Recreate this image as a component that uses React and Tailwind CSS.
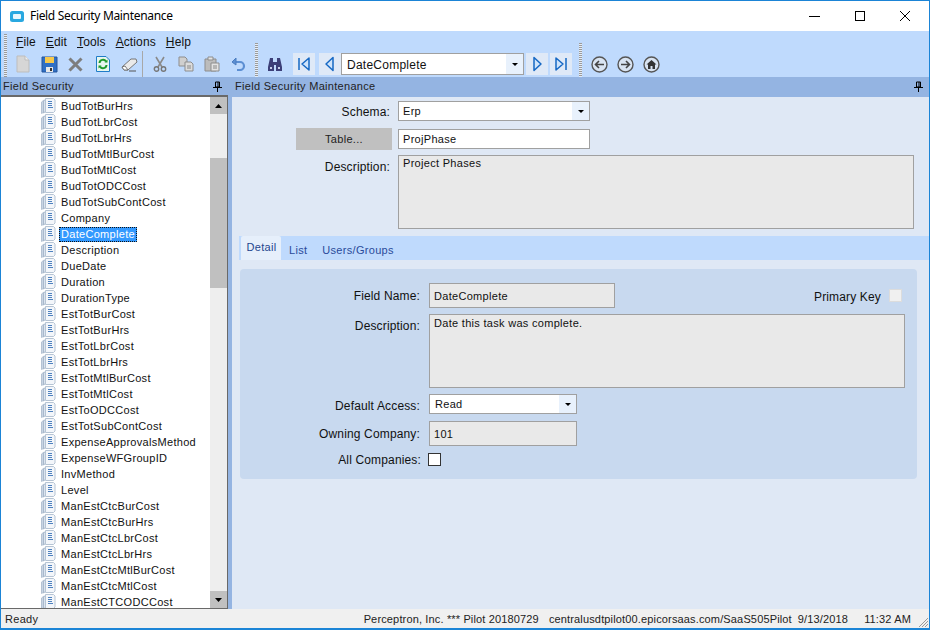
const fields = ["BudTotBurHrs","BudTotLbrCost","BudTotLbrHrs","BudTotMtlBurCost","BudTotMtlCost","BudTotODCCost","BudTotSubContCost","Company","DateComplete","Description","DueDate","Duration","DurationType","EstTotBurCost","EstTotBurHrs","EstTotLbrCost","EstTotLbrHrs","EstTotMtlBurCost","EstTotMtlCost","EstToODCCost","EstTotSubContCost","ExpenseApprovalsMethod","ExpenseWFGroupID","InvMethod","Level","ManEstCtcBurCost","ManEstCtcBurHrs","ManEstCtcLbrCost","ManEstCtcLbrHrs","ManEstCtcMtlBurCost","ManEstCtcMtlCost","ManEstCTCODCCost"];

function Grip({ className = "" }) {
  return <div className={"w-[3px] h-[43px] shrink-0 bg-[repeating-linear-gradient(to_bottom,#9a9a9a_0,#9a9a9a_1px,#e4edf8_1px,#e4edf8_2px)] " + className} />;
}
function TreeIcon() {
  return (
    <svg width="15" height="16" viewBox="0 0 15 16" className="shrink-0">
      <path d="M.5 4 L3 2 V14 L.5 15.5 Z" fill="#c9d5e4" stroke="#b4c2d3" />
      <path d="M2.5 3 L5 1 V13 L2.5 15 Z" fill="#dbe4ef" stroke="#a9b9cc" />
      <path d="M4.5 .5 H12.5 L14 2 V13 L12.5 14.5 H4.5 Z" fill="#f3f6fa" stroke="#b6c4d4" />
      <path d="M7 3.5H11M7 5.5H11M7 7.5H11M7 9.5H12" stroke="#4f82c0" strokeWidth="1" />
    </svg>
  );
}
function Caret() {
  return <svg width="6" height="3" viewBox="0 0 6 3"><path d="M0 0H6L3 3Z" fill="#000" /></svg>;
}
function Pin() {
  return (
    <svg width="9" height="11" viewBox="0 0 9 11" fill="none">
      <path d="M2.5 1H6.5V6H2.5Z M5 1V6" stroke="#000" />
      <path d="M0 6.5H9M4.5 7V11" stroke="#000" />
    </svg>
  );
}
function Combo({ value, className = "", pad = "pl-1" }) {
  return (
    <div className={"flex items-stretch bg-white border border-[#a0a0a0] shrink-0 " + className}>
      <div className={"flex-1 flex items-center min-w-0 " + pad}>{value}</div>
      <div className="w-[17px] bg-[#e8f1fc] flex items-center justify-center"><Caret /></div>
    </div>
  );
}
function NavBtn({ children, className = "" }) {
  return <div className={"h-[22px] w-[22px] bg-[#dfe9f7] flex items-center justify-center shrink-0 " + className}>{children}</div>;
}
function Nav({ d }) {
  return <svg width="16" height="16" viewBox="0 0 16 16"><path d={d} fill="#cfe4fb" stroke="#1668c4" strokeWidth="1.5" strokeLinejoin="round" /></svg>;
}
function Circle({ children }) {
  return (
    <svg width="17" height="17" viewBox="0 0 17 17" fill="none" className="shrink-0">
      <circle cx="8.5" cy="8.5" r="7.5" fill="#d9e4f2" stroke="#555" strokeWidth="1.4" />
      {children}
    </svg>
  );
}
function Toolbar() {
  return (
    <div className="h-[22px] flex items-center">
      <svg width="14" height="18" viewBox="0 0 14 18" className="ml-[3px] shrink-0"><path d="M1 1H9L13 5V17H1Z" fill="#d6d6d6" stroke="#bdbdbd" /><path d="M9 1V5H13" fill="#eee" stroke="#bdbdbd" /></svg>
      <svg width="17" height="17" viewBox="0 0 17 17" className="ml-[11px] shrink-0"><path d="M1 1H16V16H1Z" fill="#2f6fc4" stroke="#24549a" /><path d="M4 1H13V7H4Z" fill="#f5c84c" /><path d="M5 11H12V16H5Z" fill="#e8e8e8" /><path d="M9 12H11V15H9Z" fill="#333" /></svg>
      <svg width="15" height="15" viewBox="0 0 15 15" className="ml-[10px] shrink-0"><path d="M1.5 1.5L13.5 13.5M13.5 1.5L1.5 13.5" stroke="#7d7d7d" strokeWidth="3" /></svg>
      <svg width="14" height="16" viewBox="0 0 14 16" className="ml-[13px] shrink-0"><path d="M.5.5H10L13.5 4V15.5H.5Z" fill="#e7f6ee" stroke="#1f7cc8" /><path d="M3.5 7A3.5 3.5 0 0 1 10 5.5M10.5 9A3.5 3.5 0 0 1 4 10.5" stroke="#1f9a2c" strokeWidth="2" fill="none" /><path d="M8.5 6.5H11.5V3.5ZM5.5 9.5H2.5V12.5Z" fill="#1f9a2c" /></svg>
      <svg width="17" height="15" viewBox="0 0 17 15" className="ml-[11px] shrink-0"><path d="M1 10L10 2L15 2L16 5L7 13H3Z" fill="#eaeaea" stroke="#777" /><path d="M1 10L4 9L7 13H3Z" fill="#fff" stroke="#777" /><path d="M8 14H15" stroke="#555" /></svg>
      <div className="w-px h-[26px] bg-[#a8a8a8] ml-[4px] shrink-0" />
      <svg width="14" height="16" viewBox="0 0 14 16" fill="none" className="ml-[10px] shrink-0"><path d="M3 1L9 11M11 1L5 11" stroke="#8a8a8a" strokeWidth="1.6" /><circle cx="3.5" cy="13" r="2.2" stroke="#777" strokeWidth="1.4" /><circle cx="10.5" cy="13" r="2.2" stroke="#777" strokeWidth="1.4" /></svg>
      <svg width="16" height="16" viewBox="0 0 16 16" className="ml-[11px] shrink-0"><path d="M1 1H7L9 3V10H1Z" fill="#cfcfcf" stroke="#8d8d8d" /><path d="M7 6H13L15 8V15H7Z" fill="#dcdcdc" stroke="#8d8d8d" /><path d="M9 10H13M9 12H13" stroke="#888" /></svg>
      <svg width="16" height="16" viewBox="0 0 16 16" className="ml-[10px] shrink-0"><path d="M1 3H12V15H1Z" fill="#bcbcbc" stroke="#8d8d8d" /><path d="M4 1H9V4H4Z" fill="#e4e4e4" stroke="#8d8d8d" /><path d="M7 7H15V15H7Z" fill="#e2e2e2" stroke="#8d8d8d" /><path d="M9 10H13M9 12H13" stroke="#888" /></svg>
      <svg width="15" height="14" viewBox="0 0 15 14" fill="none" className="ml-[11px] shrink-0"><path d="M3 5H9A4 4 0 0 1 9 13H6" stroke="#5c8fd3" strokeWidth="2.2" /><path d="M5 1V8L1 5Z" fill="#5c8fd3" stroke="#4a7cc0" /></svg>
      <Grip className="ml-[9px] -my-[10px]" />
      <svg width="16" height="15" viewBox="0 0 16 15" className="ml-[9px] shrink-0"><path d="M3 1H6V5H10V1H13L15 10V14H9V8H7V14H1V10Z" fill="#3c3f78" /><path d="M3 11H5M11 11H13" stroke="#c8d0e8" strokeWidth="2" /></svg>
      <NavBtn className="ml-[10px]"><Nav d="M3 2V14 M13 2V14L6 8Z" /></NavBtn>
      <NavBtn className="ml-[4px]"><Nav d="M11 1.5V14.5L4 8Z" /></NavBtn>
      <Combo value={<span className="pt-px">DateComplete</span>} className="w-[183px] h-[22px] text-[12px] tracking-[0.25px]" pad="pl-[5px]" />
      <NavBtn className="ml-[2px]"><Nav d="M5 1.5V14.5L12 8Z" /></NavBtn>
      <NavBtn className="ml-[2px]"><Nav d="M13 2V14 M3 2V14L10 8Z" /></NavBtn>
      <Grip className="ml-[7px] -my-[10px]" />
      <div className="ml-[9px]"><Circle><path d="M13 8.5H5M8 5L4.5 8.5L8 12" stroke="#444" strokeWidth="1.6" /></Circle></div>
      <div className="ml-[9px]"><Circle><path d="M4 8.5H12M9 5L12.5 8.5L9 12" stroke="#444" strokeWidth="1.6" /></Circle></div>
      <div className="ml-[9px]"><Circle><path d="M3.5 8.5L8.5 4L13.5 8.5H12V13H9.5V10H7.5V13H5V8.5Z" fill="#333" /></Circle></div>
    </div>
  );
}
const input = "border border-[#a0a0a0] shrink-0";
const ro = "bg-[#e9e9e9] " + input;
const label = "text-right text-[12px] tracking-[0.15px]";

export default function App() {
  return (
    <div className="w-[930px] h-[630px] flex flex-col overflow-hidden bg-white border-x border-t border-[#1b84d6] border-b-2 text-[11px] text-[#111] leading-none tracking-[0.3px] font-['Liberation_Sans',Arial,sans-serif] select-none">
      {/* title bar */}
      <div className="h-[30px] flex items-center shrink-0 bg-white">
        <svg width="14" height="11" viewBox="0 0 14 11" className="ml-[9px]"><rect width="14" height="11" rx="2.5" fill="#29a8e0" /><rect x="3" y="3" width="8" height="5" rx="1" fill="#e8f7fd" /></svg>
        <span className="ml-[6px] text-[12px] tracking-[-0.33px] text-black font-['Noto_Sans',sans-serif]">Field Security Maintenance</span>
        <div className="ml-auto flex items-center">
          <svg width="11" height="1" className="mr-[35px]"><rect width="11" height="1" fill="#000" /></svg>
          <svg width="10" height="10" className="mr-[35px]"><rect x=".5" y=".5" width="9" height="9" fill="none" stroke="#000" /></svg>
          <svg width="10" height="10" className="mr-[19px]"><path d="M0 0L10 10M10 0L0 10" stroke="#000" /></svg>
        </div>
      </div>
      {/* menu + toolbar */}
      <div className="h-[46px] shrink-0 bg-[#bfdafd] flex">
        <Grip className="ml-[3px] mt-[3px]" />
        <div className="flex flex-col ml-[-1px]">
          <div className="h-[22px] flex items-center gap-[10px] pl-[10px] text-[12px] tracking-[0.12px]">
            <span><u>F</u>ile</span><span><u>E</u>dit</span><span><u>T</u>ools</span><span><u>A</u>ctions</span><span><u>H</u>elp</span>
          </div>
          <div className="ml-[7px]"><Toolbar /></div>
        </div>
      </div>
      {/* main */}
      <div className="flex-1 min-h-0 flex bg-[#94b4e2]">
        {/* left panel */}
        <div className="w-[227px] shrink-0 flex flex-col">
          <div className="h-[18px] shrink-0 flex items-center justify-between pl-[2px] pr-[6px] text-[#222]">
            <span>Field Security</span><Pin />
          </div>
          <div className="flex-1 min-h-0 flex border-y border-r border-[#696969] border-t-2 bg-white">
            <div className="flex-1 min-w-0 overflow-hidden pt-px">
              {fields.map((f) => (
                <div key={f} className="h-4 flex items-center pl-[40px] text-[#111]">
                  <TreeIcon />
                  {f === "DateComplete"
                    ? <span className="ml-[3px] h-[15px] px-[2px] flex items-center bg-[#3399ff] text-white outline-1 outline-dotted outline-[#111] -outline-offset-1">{f}</span>
                    : <span className="ml-[5px]">{f}</span>}
                </div>
              ))}
            </div>
            <div className="w-[17px] shrink-0 bg-[#eeeeee] flex flex-col">
              <div className="h-[17px] bg-[#c0c0c0] flex items-center justify-center shrink-0"><svg width="7" height="4" viewBox="0 0 7 4"><path d="M0 4H7L3.5 0Z" /></svg></div>
              <div className="h-[44px] shrink-0" />
              <div className="h-[130px] bg-[#c0c0c0] shrink-0" />
              <div className="flex-1" />
              <div className="h-[17px] bg-[#c0c0c0] flex items-center justify-center shrink-0"><svg width="7" height="4" viewBox="0 0 7 4"><path d="M0 0H7L3.5 4Z" /></svg></div>
            </div>
          </div>
        </div>
        {/* right panel */}
        <div className="flex-1 min-w-0 flex flex-col">
          <div className="h-[18px] shrink-0 flex items-center justify-between pl-[7px] pr-[6px] text-[#222]">
            <span>Field Security Maintenance</span><Pin />
          </div>
          <div className="flex-1 min-h-0 ml-[4px] mt-[2px] bg-[#dfe8f5] flex flex-col">
            <div className="flex items-center h-[20px] mt-[4px]">
              <span className={"w-[158px] pt-px " + label}>Schema:</span>
              <Combo value="Erp" className="ml-[8px] w-[192px] h-[20px]" />
            </div>
            <div className="flex items-center h-[22px] mt-[7px]">
              <div className="ml-[64px] w-[96px] h-[22px] bg-[#c0c0c0] flex items-center justify-center text-[#222]">Table...</div>
              <div className={input + " ml-[6px] w-[192px] h-[20px] bg-white flex items-center pl-[4px]"}>ProjPhase</div>
            </div>
            <div className="flex items-start mt-[5px] h-[74px]">
              <span className={"w-[158px] mt-[6px] " + label}>Description:</span>
              <div className={ro + " ml-[8px] w-[516px] h-[74px] pl-[4px] pt-[2px]"}>Project Phases</div>
            </div>
            <div className="mt-[7px] ml-[7px] h-[24px] bg-[#bfdafd] flex items-end shrink-0 text-[#2a4a9a]">
              <div className="ml-[2px] w-[40px] h-[24px] bg-[#e6effb] rounded-t-[2px] flex items-center justify-center pl-px pb-px text-[#24468f]">Detail</div>
              <span className="ml-[8px] pb-[4px]">List</span>
              <span className="ml-[15px] pb-[4px]">Users/Groups</span>
            </div>
            <div className="mt-[9px] ml-[8px] w-[677px] h-[210px] bg-[#c8d9ef] rounded-[4px] flex flex-col shrink-0">
              <div className="flex items-center mt-[14px] h-[25px]">
                <span className={"w-[180px] pt-px " + label}>Field Name:</span>
                <div className={ro + " ml-[9px] w-[186px] h-[25px] flex items-center pl-[4px] pt-px"}>DateComplete</div>
                <span className="ml-[199px] pt-[3px] text-[12px] tracking-[0.15px]">Primary Key</span>
                <div className="ml-[8px] w-[13px] h-[13px] bg-[#f0f0f0] border border-[#dcdcdc]" />
              </div>
              <div className="flex items-start mt-[6px] h-[74px]">
                <span className={"w-[180px] mt-[6px] " + label}>Description:</span>
                <div className={ro + " ml-[9px] w-[476px] h-[74px] pl-[4px] pt-[3px]"}>Date this task was complete.</div>
              </div>
              <div className="flex items-center mt-[6px] h-[20px]">
                <span className={"w-[180px] pt-[4px] " + label}>Default Access:</span>
                <Combo value="Read" className="ml-[9px] w-[148px] h-[20px]" pad="pl-[5px]" />
              </div>
              <div className="flex items-center mt-[7px] h-[25px]">
                <span className={"w-[180px] pt-px " + label}>Owning Company:</span>
                <div className={ro + " ml-[9px] w-[148px] h-[25px] flex items-center pl-[4px] pt-px"}>101</div>
              </div>
              <div className="flex items-center mt-[7px] h-[13px]">
                <span className={"w-[181px] pt-px " + label}>All Companies:</span>
                <div className="ml-[7px] w-[13px] h-[13px] bg-white border border-[#333]" />
              </div>
            </div>
          </div>
        </div>
      </div>
      {/* status */}
      <div className="h-[19px] shrink-0 bg-[#f0f0f0] flex items-center text-[#222] tracking-[0.15px] pl-[4px] pt-[2px] relative">
        <span className="tracking-[0.3px]">Ready</span>
        <span className="ml-auto">Perceptron, Inc. *** Pilot 20180729</span>
        <span className="ml-[10px]">centralusdtpilot00.epicorsaas.com/SaaS505Pilot</span>
        <span className="ml-[6px]">9/13/2018</span>
        <span className="ml-[16px] mr-[18px]">11:32 AM</span>
        <svg width="11" height="11" viewBox="0 0 11 11" className="absolute right-0 bottom-0"><path d="M10 1L1 10M10 4L4 10M10 7L7 10" stroke="#999" /></svg>
      </div>
    </div>
  );
}
